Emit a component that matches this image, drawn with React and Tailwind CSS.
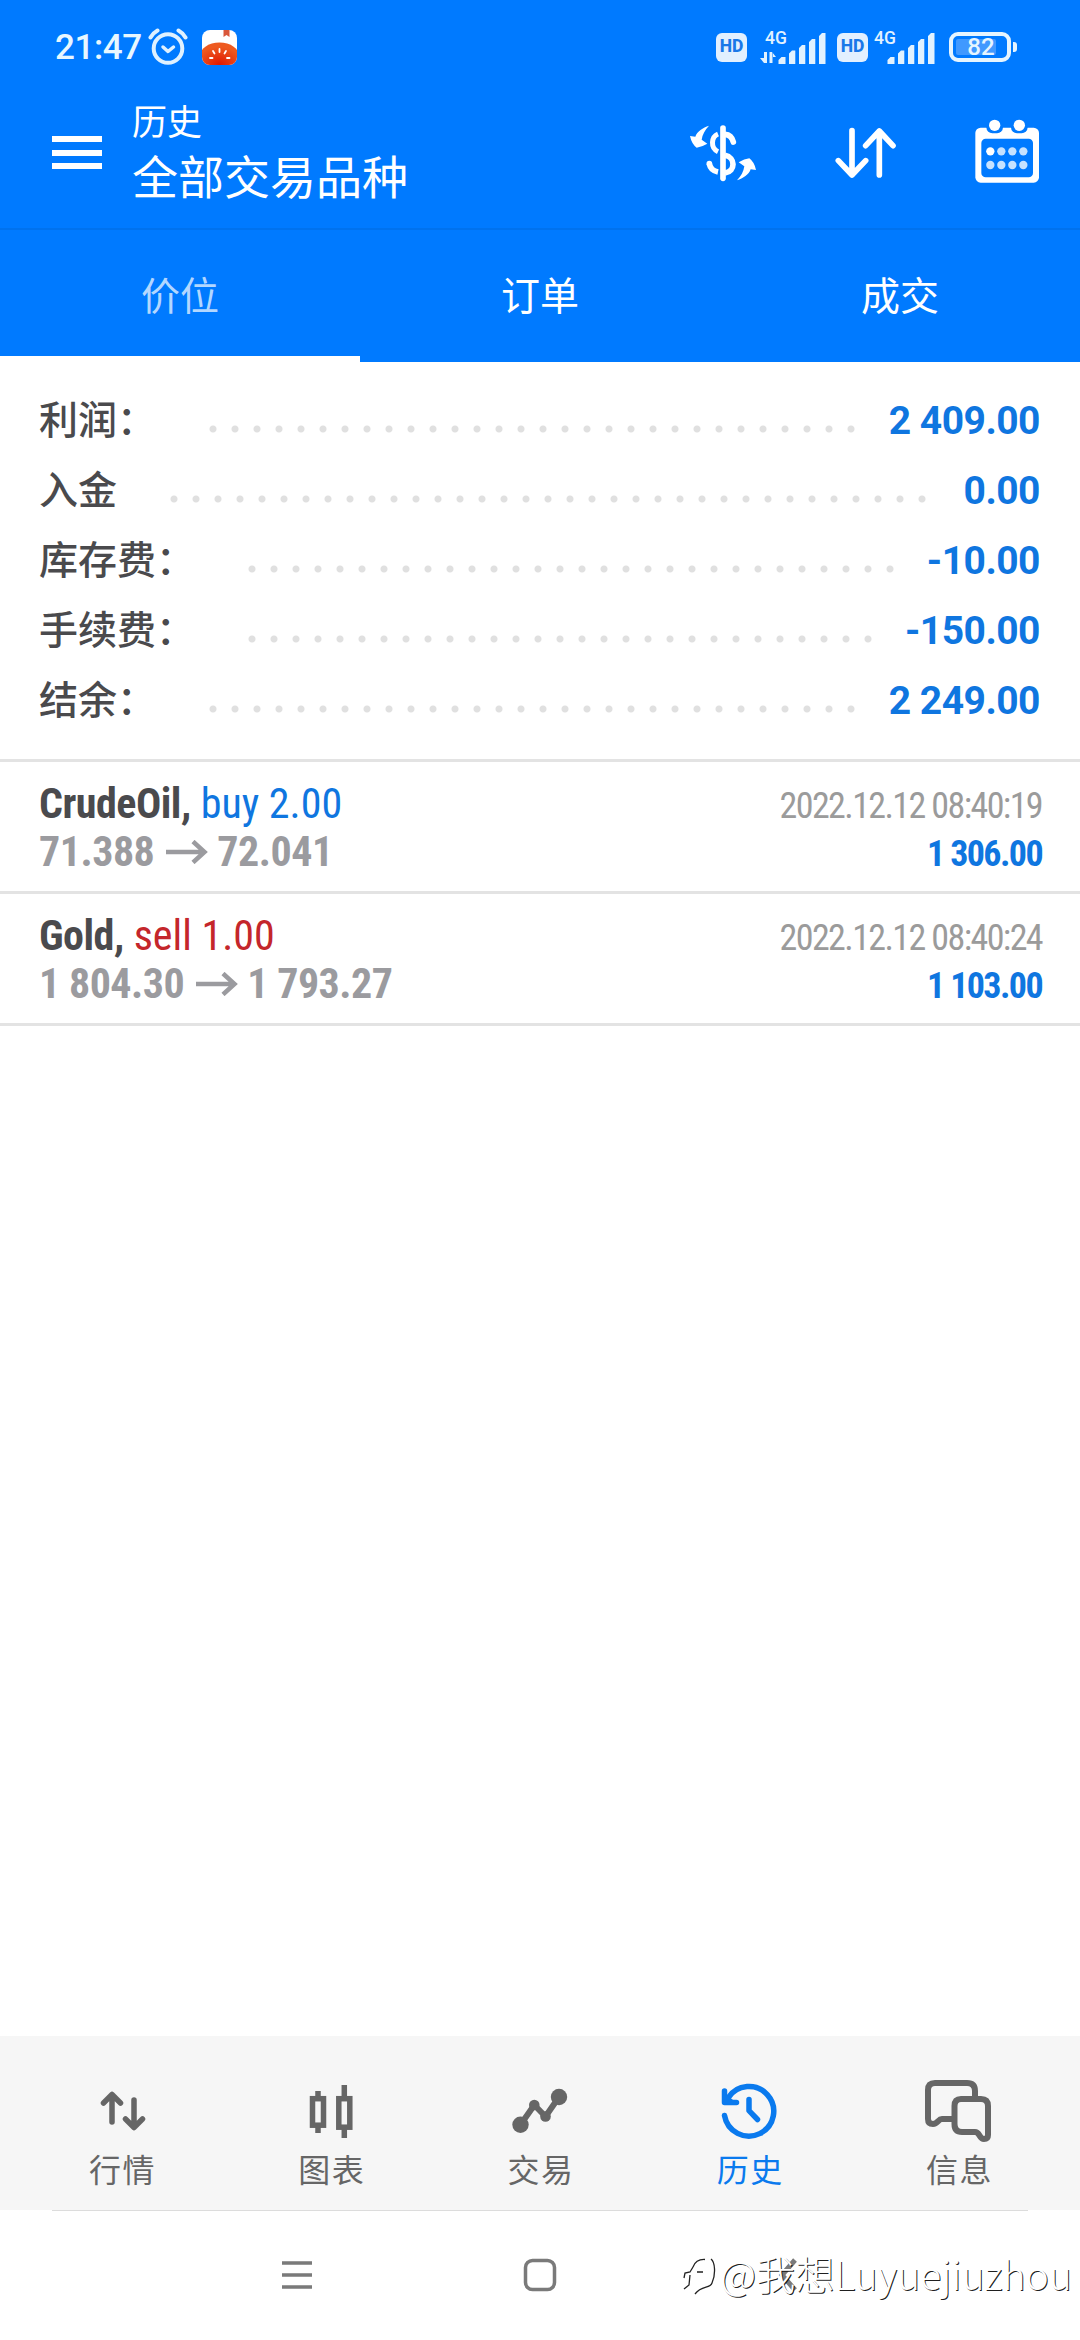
function AlarmIcon() {
  return (
    <svg className="ml-[7px] h-[40px] w-[40px]" viewBox="0 0 40 40" fill="none" stroke="#dff1ff" strokeLinecap="round">
      <circle cx="20" cy="21.5" r="14.3" strokeWidth="4" />
      <path d="M2.5 10.5Q5 6 9.5 3.5M37.5 10.5Q35 6 30.500 3.500" strokeWidth="4" />
      <path d="M15 20l5 4.500 5.500-4.500" strokeWidth="3.500" strokeLinejoin="round" />
    </svg>
  );
}

function TomatoIcon() {
  return (
    <svg className="ml-[14px] h-[35px] w-[35px]" viewBox="0 0 35 35">
      <defs>
        <clipPath id="tile"><rect width="35" height="35" rx="8" /></clipPath>
        <radialGradient id="tomato" cx="0.5" cy="0.75" r="0.6">
          <stop offset="0" stopColor="#e01800" />
          <stop offset="1" stopColor="#ee5a20" />
        </radialGradient>
      </defs>
      <g clipPath="url(#tile)">
        <rect width="35" height="35" fill="#fff" />
        <ellipse cx="17.500" cy="27" rx="20" ry="14.500" fill="url(#tomato)" />
        <path d="M21.500 0h6v7l-3-2-3 2z" fill="#d9573a" />
        <path d="M17.500 19v3M11 21l1.500 2.500M24 21l-1.500 2.500M8 28h2.500M25 28h2.500" stroke="#fff" strokeWidth="1.800" strokeLinecap="round" />
      </g>
    </svg>
  );
}

function HdBadge() {
  return (
    <span className="flex h-[29px] w-[31px] items-center justify-center rounded-[6px] bg-[#e2f0ff] text-[17.5px] leading-none font-extrabold text-[#1a78e8]">
      HD
    </span>
  );
}

function Signal({ data }) {
  return (
    <svg className="h-[36px] w-[67px]" viewBox="0 0 67 36" fill="#e2f2ff">
      <text x="5" y="15" fontSize="17.500" fontWeight="500" fontFamily="Roboto">4G</text>
      {data && <path d="M4 23v11h3V23zM4 34L0 29h4zM9.500 23v11h3V23zM12 23l4 5h-4z" />}
      <path d="M18.500 35v-4l3-3h4v7zM29 35V24.500l3-3h3.300V35zM39 35V19l3-3h3.300v19zM49 35V13l3-3h3.300v25zM59 35V7l3-3h3.500v31z" />
    </svg>
  );
}

function Battery() {
  return (
    <div className="flex items-center">
      <div className="flex h-[30px] w-[62px] items-center rounded-[9px] border-4 border-[#e6f5ff] pl-[3px]">
        <div className="flex h-[16px] w-[40px] items-center justify-center rounded-[2px] bg-[#4099ff] pl-[10px] text-[24px] leading-none font-medium text-[#e6f5ff]">82</div>
      </div>
      <div className="ml-[2px] h-[10px] w-[4px] rounded-r-[3px] bg-[#e6f5ff]" />
    </div>
  );
}

function StatusBar() {
  return (
    <div className="flex h-[94px] items-center pr-[63px] pl-[55px]">
      <span className="w-[86px] text-[35px] leading-none font-medium tracking-[-0.4px] text-[#e8f7ff]">21:47</span>
      <AlarmIcon />
      <TomatoIcon />
      <div className="ml-auto flex items-center">
        <HdBadge />
        <div className="ml-[13px]"><Signal data /></div>
        <div className="ml-[10px]"><HdBadge /></div>
        <div className="ml-[1px]"><Signal /></div>
        <div className="ml-[13px]"><Battery /></div>
      </div>
    </div>
  );
}

function CurrencyIcon() {
  const arrow = "M144 377C126 383 108 394 103 410L87 408Q92 432 107 443Q122 441 139 431L122 419C124 403 132 390 144 377Z";
  return (
    <svg className="h-[60px] w-[70px]" viewBox="81 369 210 180" fill="none" stroke="#fff">
      <path d={arrow} fill="#fff" stroke="none" />
      <path d={arrow} fill="#fff" stroke="none" transform="rotate(180 186 459)" />
      <path d="M186 384V535" strokeWidth="17" strokeLinecap="round" />
      <path d="M192 403C207 404 214 414 217 426" strokeWidth="17" strokeLinecap="round" />
      <path d="M171 402C151 410 147 444 171 455" strokeWidth="15" />
      <path d="M192 466C224 472 224 514 192 519" strokeWidth="17" />
      <path d="M145 491C147 504 157 513 171 516" strokeWidth="17" />
      <circle cx="145" cy="491" r="8.500" fill="#fff" stroke="none" />
    </svg>
  );
}

function SortIcon() {
  return (
    <svg className="h-[60px] w-[70px]" viewBox="511 369 210 180" fill="none" stroke="#fff" strokeWidth="17" strokeLinecap="round" strokeLinejoin="round">
      <path d="M574 392V524M533 482L574 525L615 482M656 525V393M615 437L656 393L697 437" />
    </svg>
  );
}

function CalendarIcon() {
  const dots = [455, 496].flatMap((y) => [990, 1023, 1056, 1089].map((x) => [x, y]));
  return (
    <svg className="h-[70px] w-[70px]" viewBox="935 349 210 210">
      <rect x="945" y="384" width="191" height="165" rx="16" fill="#fff" />
      <rect x="963" y="417" width="155" height="116" rx="13" fill="#007aff" />
      {[1003, 1077].map((x) => (
        <g key={x}>
          <rect x={x - 25} y="355" width="50" height="46" rx="18" fill="#007aff" />
          <circle cx={x} cy="377" r="17" fill="#fff" />
        </g>
      ))}
      {dots.map(([x, y], i) => (
        <circle key={i} cx={x} cy={y} r="12.500" fill={i === 0 ? "#fff" : "#c6e2ff"} />
      ))}
    </svg>
  );
}

function Header() {
  return (
    <header className="bg-[#007aff] text-white">
      <StatusBar />
      <div className="flex h-[136px] items-start border-b-2 border-[#0072ee] pl-[52px]">
        <div className="mt-[42px] flex w-[50px] flex-col gap-[7.5px]">
          <span className="h-[6px] bg-white" />
          <span className="h-[6px] bg-white" />
          <span className="h-[6px] bg-white" />
        </div>
        <div className="ml-[30px] flex flex-col">
          <span className="mt-[8px] text-[35px] leading-[44px]">历史</span>
          <span className="mt-[4px] text-[46px] leading-[56px]">全部交易品种</span>
        </div>
        <div className="mt-[29px] ml-auto flex pr-[38px]">
          <CurrencyIcon />
          <span className="ml-[73px]"><SortIcon /></span>
          <span className="mt-[-7px] ml-[71px]"><CalendarIcon /></span>
        </div>
      </div>
      <nav className="grid h-[132px] grid-cols-3 text-[39px] leading-none">
        <div className="flex h-[132px] items-center justify-center border-b-6 border-white pt-[9px] text-[#b3d7ff]">价位</div>
        <div className="flex h-[132px] items-center justify-center pt-[3px]">订单</div>
        <div className="flex h-[132px] items-center justify-center pt-[3px]">成交</div>
      </nav>
    </header>
  );
}

const SUMMARY = [
  ["利润：", "2 409.00"],
  ["入金", "0.00"],
  ["库存费：", "-10.00"],
  ["手续费：", "-150.00"],
  ["结余：", "2 249.00"],
];

function Summary() {
  return (
    <section className="h-[400px] border-b-3 border-[#e3e3e3] pt-[24px] pr-[40px] pl-[39px]">
      {SUMMARY.map(([label, value]) => (
        <div key={label} className="flex h-[70px] items-center text-[39px] leading-[70px]">
          <span className="font-medium text-[#4a4a4d]">{label}</span>
          <span className="mt-[15px] mr-[24px] ml-[46px] h-[22px] flex-1 bg-[radial-gradient(circle,#e0e0e0_3px,transparent_4px)] bg-[length:22px_22px] bg-repeat-x" />
          <span className="font-bold tracking-[-0.5px] text-[#0f76e0]">{value}</span>
        </div>
      ))}
    </section>
  );
}

function Arrow() {
  return (
    <svg className="mr-[9px] ml-[12px] h-[24px] w-[42px]" viewBox="0 0 42 24" fill="none" stroke="#9b9b9f" strokeWidth="4.500">
      <path d="M0 12H38M27 1.500L38.500 12L27 22.500" />
    </svg>
  );
}

const DEALS = [
  { symbol: "CrudeOil,", side: "buy 2.00", tone: "text-[#0f76e0]", from: "71.388", to: "72.041", time: "2022.12.12 08:40:19", profit: "1 306.00" },
  { symbol: "Gold,", side: "sell 1.00", tone: "text-[#c4262b]", from: "1 804.30", to: "1 793.27", time: "2022.12.12 08:40:24", profit: "1 103.00" },
];

function Deal({ d }) {
  return (
    <div className='flex h-[132px] justify-between border-b-3 border-[#e3e3e3] pt-[18px] pr-[38px] pl-[39px] font-["Roboto_Condensed","Roboto",sans-serif] font-stretch-75%'>
      <div className="flex flex-col text-[42px] leading-[48px]">
        <div className="flex gap-[10px]">
          <span className="font-bold tracking-[-0.5px] text-[#4a4a4d]">{d.symbol}</span>
          <span className={d.tone}>{d.side}</span>
        </div>
        <div className="flex items-center font-bold tracking-[-0.5px] text-[#9b9b9f]">
          <span>{d.from}</span>
          <Arrow />
          <span>{d.to}</span>
        </div>
      </div>
      <div className="flex flex-col items-end pt-[2px] text-[36px] leading-[48px] tracking-[-1.6px]">
        <span className="text-[#9b9b9b]">{d.time}</span>
        <span className="font-bold text-[#0f76e0]">{d.profit}</span>
      </div>
    </div>
  );
}

function QuotesIcon() {
  return (
    <svg className="h-[60px] w-[80px]" viewBox="81 2080 80 60" fill="none" stroke="#666" strokeWidth="5.500" strokeLinecap="round" strokeLinejoin="round">
      <path d="M111 2122V2095M102.500 2103L111 2094.500L119.500 2103M133 2100V2127M124.500 2119L133 2127.500L141.500 2119" />
    </svg>
  );
}

function ChartIcon() {
  return (
    <svg className="h-[60px] w-[80px]" viewBox="291 2080 80 60" fill="none" stroke="#666" strokeWidth="5.500">
      <path d="M318 2091V2098M318 2126V2133M344.300 2085V2098M344.300 2128V2138" />
      <rect x="312.500" y="2098.700" width="11" height="26.500" />
      <rect x="338.800" y="2098.700" width="11" height="28.500" />
    </svg>
  );
}

function TradeIcon() {
  return (
    <svg className="h-[60px] w-[80px]" viewBox="500 2080 80 60" fill="#666">
      <path d="M520.500 2124.700L534.300 2105L545.500 2116.500L559 2097" fill="none" stroke="#666" strokeWidth="6" strokeLinejoin="round" />
      <circle cx="520.500" cy="2124.700" r="8.200" />
      <circle cx="534.300" cy="2105" r="5.300" />
      <circle cx="545.500" cy="2116.500" r="5.300" />
      <circle cx="559" cy="2097" r="8.200" />
    </svg>
  );
}

function HistoryIcon() {
  return (
    <svg className="h-[60px] w-[80px]" viewBox="709 2080 80 60" fill="none" stroke="#0a7aee" strokeWidth="5.500" strokeLinecap="round" strokeLinejoin="round">
      <path d="M724.500 2115.500A24.800 24.800 0 1 0 728 2098" />
      <path d="M724.500 2091V2102.500H736.500" />
      <path d="M724.500 2093L736 2102.500H724.500Z" fill="#0a7aee" stroke="none" />
      <path d="M749 2099.500V2110.700L757.500 2119.500" />
    </svg>
  );
}

function MessagesIcon() {
  return (
    <svg className="h-[64px] w-[80px]" viewBox="918 2080 80 64" fill="none" stroke="#666" strokeWidth="6" strokeLinejoin="round">
      <path d="M952 2119H942C938 2119 938 2124 933 2124C929.500 2124 928 2122 928 2119V2090Q928 2083 935 2083H967Q975 2083 975 2091V2098" />
      <path d="M961 2099H981Q988 2099 988 2106V2135C988 2138 986.500 2139 984 2139C979 2139 980 2132 975 2132H962Q954.500 2132 954.500 2124V2106Q954.500 2099 961 2099Z" />
    </svg>
  );
}

const TABS = [
  ["行情", QuotesIcon],
  ["图表", ChartIcon],
  ["交易", TradeIcon],
  ["历史", HistoryIcon],
  ["信息", MessagesIcon],
];

function BottomTabs() {
  return (
    <nav className="grid h-[174px] grid-cols-5 bg-[#f6f6f6] px-[17px] pt-[44px]">
      {TABS.map(([label, Icon]) => (
        <div key={label} className={label === "历史" ? "flex flex-col items-center text-[#0a7aee]" : "flex flex-col items-center text-[#666]"}>
          <div className="h-[66px]"><Icon /></div>
          <span className="mt-[1px] pl-[2px] text-[32px] leading-[48px] tracking-[1.5px]">{label}</span>
        </div>
      ))}
    </nav>
  );
}

function SystemBar() {
  return (
    <div className="relative h-[130px] bg-white">
      <div className="mx-[52px] h-px bg-[#dcdcdc]" />
      <div className="flex h-[128px] items-center justify-center pl-[4px]">
        <svg className="h-[34px] w-[34px]" viewBox="0 0 34 34" stroke="#7a7a7a" strokeWidth="3.500">
          <path d="M2 5H32M2 17H32M2 29H32" />
        </svg>
        <svg className="ml-[209px] h-[34px] w-[34px]" viewBox="0 0 34 34" fill="none" stroke="#7a7a7a" strokeWidth="3.500">
          <rect x="2.500" y="2.500" width="29" height="29" rx="7" />
        </svg>
        <svg className="ml-[214px] h-[34px] w-[34px]" viewBox="0 0 34 34" fill="none" stroke="#7a7a7a" strokeWidth="5">
          <path d="M24 2L11 17L24 32" />
        </svg>
      </div>
      <div className='absolute top-[35px] right-[8px] flex items-center font-["Noto_Sans_CJK_SC",sans-serif] text-[39.3px] leading-[56px] font-light whitespace-nowrap text-white [text-shadow:1px_1px_0_rgba(0,0,0,0.9)]'>
        <svg className="mt-[2px] mr-[1px] h-[44px] w-[38px]" viewBox="0 0 38 44" fill="none" stroke="#222" strokeWidth="1.300">
          <path d="M12 15Q15 7 24 7.500M30 7C34 10 35 22 31 31C29 37 21 33 14 42" />
          <path d="M12 15L9 20L4 21L3 26M16 20H22M9 23L8 33L3 37" />
        </svg>
        <span>@我想Luyuejiuzhou</span>
      </div>
    </div>
  );
}

export default function App() {
  return (
    <div className={'flex h-[2340px] w-[1080px] flex-col overflow-hidden bg-white font-["Roboto","Noto_Sans_CJK_SC",sans-serif]'} lang="zh-CN">
      <Header />
      <Summary />
      {DEALS.map((d) => <Deal key={d.symbol} d={d} />)}
      <main className="flex-1" />
      <BottomTabs />
      <SystemBar />
    </div>
  );
}
